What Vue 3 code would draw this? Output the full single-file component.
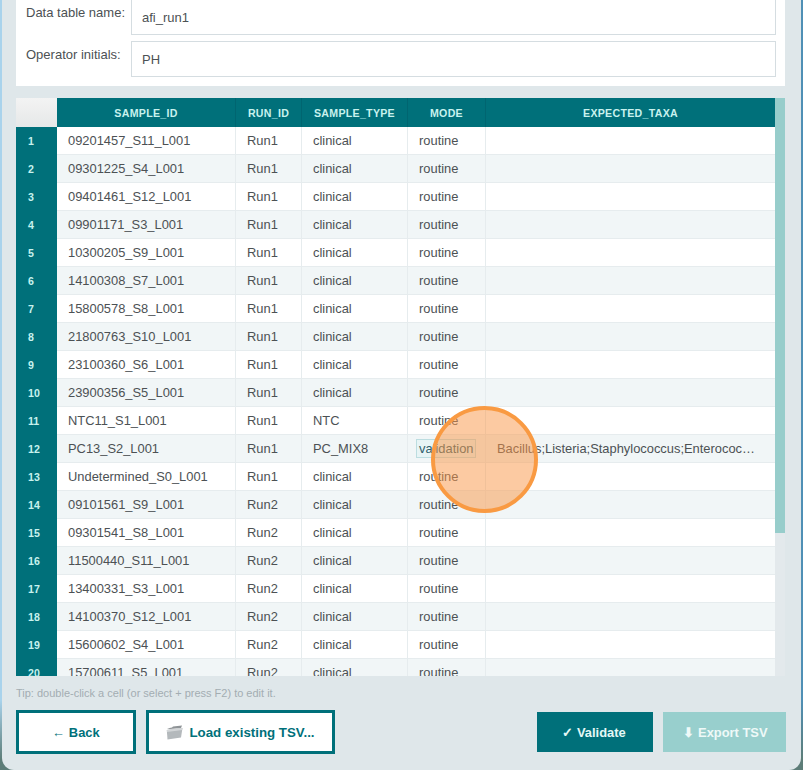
<script setup>
const columns = ['SAMPLE_ID', 'RUN_ID', 'SAMPLE_TYPE', 'MODE', 'EXPECTED_TAXA']

function sample(id, run = 'Run1', type = 'clinical', mode = 'routine', taxa = '') {
  return { id, run, type, mode, taxa }
}

const rows = [
  sample('09201457_S11_L001'),
  sample('09301225_S4_L001'),
  sample('09401461_S12_L001'),
  sample('09901171_S3_L001'),
  sample('10300205_S9_L001'),
  sample('14100308_S7_L001'),
  sample('15800578_S8_L001'),
  sample('21800763_S10_L001'),
  sample('23100360_S6_L001'),
  sample('23900356_S5_L001'),
  sample('NTC11_S1_L001', 'Run1', 'NTC'),
  sample('PC13_S2_L001', 'Run1', 'PC_MIX8', 'validation', 'Bacillus;Listeria;Staphylococcus;Enterococcus;Escherichia;Salmonella'),
  sample('Undetermined_S0_L001'),
  sample('09101561_S9_L001', 'Run2'),
  sample('09301541_S8_L001', 'Run2'),
  sample('11500440_S11_L001', 'Run2'),
  sample('13400331_S3_L001', 'Run2'),
  sample('14100370_S12_L001', 'Run2'),
  sample('15600602_S4_L001', 'Run2'),
  sample('15700611_S5_L001', 'Run2')
]
</script>

<template>
  <div class="desktop">
    <div class="window">
      <div class="form-card">
        <label class="form-label">Data table name:</label>
        <input class="form-input" type="text" value="afi_run1" />
        <label class="form-label">Operator initials:</label>
        <input class="form-input" type="text" value="PH" />
      </div>

      <div class="table-box">
        <div class="table-clip">
          <table class="samples">
            <colgroup>
              <col class="col-index" />
              <col class="col-sample" />
              <col class="col-run" />
              <col class="col-type" />
              <col class="col-mode" />
              <col />
            </colgroup>
            <thead>
              <tr>
                <th class="corner"></th>
                <th v-for="col in columns" :key="col">{{ col }}</th>
              </tr>
            </thead>
            <tbody>
              <tr v-for="(row, i) in rows" :key="row.id">
                <th class="row-no">{{ i + 1 }}</th>
                <td>{{ row.id }}</td>
                <td>{{ row.run }}</td>
                <td>{{ row.type }}</td>
                <td><span :class="{ selected: row.mode === 'validation' }">{{ row.mode }}</span></td>
                <td class="taxa">{{ row.taxa }}</td>
              </tr>
            </tbody>
          </table>
        </div>
        <div class="scrollbar"><div class="thumb"></div></div>
      </div>

      <p class="tip">Tip: double-click a cell (or select + press F2) to edit it.</p>

      <div class="actions">
        <button class="btn outline back">← Back</button>
        <button class="btn outline load">
          <svg class="folder" width="17" height="15" viewBox="0 0 17 15">
            <path d="M1 3.5 L6 2.5 L7 1.5 L16 .5 L15 3 L4 4 Z" fill="#8f9497" />
            <path d="M3.5 4.5 L16.5 3 L15 12.5 L1.5 14.5 L.8 5 Z" fill="#b4b9bc" />
            <path d="M.8 5 L3.5 4.5 L16.5 3 L16.2 5 L1 7 Z" fill="#d3d6d8" />
          </svg>
          Load existing TSV...
        </button>
        <div class="spacer"></div>
        <button class="btn solid validate">✓ Validate</button>
        <button class="btn solid disabled">⬇ Export TSV</button>
      </div>
    </div>

    <div class="click-marker"></div>
  </div>
</template>

<style scoped>
.desktop {
  position: relative;
  width: 803px;
  height: 770px;
  overflow: hidden;
  background:
    linear-gradient(180deg, rgba(70, 105, 100, 0) 0, rgba(70, 105, 100, 0) 700px, #5d7d78 760px),
    linear-gradient(90deg, #a9d3ec 0%, #a9d3ec 50%, #4f8fb5 100%);
  font-family: "Liberation Sans", Arial, sans-serif;
}

.window {
  display: flex;
  flex-direction: column;
  height: 770px;
  margin: 0 2px;
  padding: 0 16px 0 14px;
  box-sizing: border-box;
  background: #dfe7ea;
  border-radius: 0 0 12px 12px;
}

.form-card {
  display: grid;
  grid-template-columns: 105px 1fr;
  align-content: start;
  row-gap: 6px;
  height: 87px;
  margin-top: -1px;
  padding: 0 9px 0 10px;
  box-sizing: border-box;
  background: #fff;
}

.form-label {
  padding-top: 6px;
  font-size: 13px;
  line-height: 15px;
  color: #4c5154;
}

.form-input {
  height: 36px;
  box-sizing: border-box;
  padding: 0 10px;
  border: 1px solid #d5dde1;
  background: #fff;
  font-family: inherit;
  font-size: 13px;
  color: #4c5154;
  outline: none;
}

.table-box {
  display: flex;
  height: 578px;
  margin-top: 12px;
  overflow: hidden;
  background: #fff;
}

.table-clip {
  flex: 1;
  overflow: hidden;
}

.samples {
  width: 759px;
  table-layout: fixed;
  border-collapse: separate;
  border-spacing: 0;
  font-size: 12.9px;
  color: #4c5154;
}

.col-index { width: 41px; }
.col-sample { width: 179px; }
.col-run { width: 66px; }
.col-type { width: 106px; }
.col-mode { width: 78px; }

.samples thead th {
  height: 29px;
  padding: 0;
  box-sizing: border-box;
  background: #00707a;
  border-right: 1px solid #006570;
  color: #c8f2ee;
  font-size: 10.6px;
  font-weight: 700;
  letter-spacing: 0.3px;
  text-align: center;
}

.samples thead th:last-child {
  border-right: none;
}

.samples thead .corner {
  background: linear-gradient(180deg, #f3f3f3, #e6e8e8);
  border-right: none;
}

.samples td {
  height: 28px;
  padding: 0 11px;
  box-sizing: border-box;
  border-right: 1px solid #e6ecee;
  border-bottom: 1px solid #e6ecee;
  white-space: nowrap;
  overflow: hidden;
}

.samples td:last-child {
  border-right: none;
}

.samples tbody tr:nth-child(even) td {
  background: #f1f6f7;
}

.samples .row-no {
  height: 28px;
  padding: 0 0 0 12px;
  box-sizing: border-box;
  background: #00707a;
  color: #c8f2ee;
  font-size: 10.6px;
  font-weight: 700;
  text-align: left;
}

.samples .taxa {
  padding-right: 17px;
  text-overflow: ellipsis;
}

.selected {
  display: inline-block;
  height: 19px;
  line-height: 17px;
  box-sizing: border-box;
  margin-left: -3px;
  padding: 0 2px;
  border: 1px solid #bcdde0;
  background: #e7f4f5;
  color: #2f5f6b;
}

.scrollbar {
  flex: none;
  width: 10px;
  background: #e3e9ec;
}

.thumb {
  height: 435px;
  background: #97cdcb;
}

.tip {
  margin: 11px 0 0;
  font-size: 11px;
  line-height: 13px;
  color: #a3adb2;
}

.actions {
  display: flex;
  align-items: center;
  gap: 10px;
  margin-top: 10px;
  margin-right: -1px;
}

.spacer {
  flex: 1;
}

.btn {
  box-sizing: border-box;
  font-family: inherit;
  font-size: 12.9px;
  font-weight: 700;
  cursor: pointer;
}

.outline {
  height: 44px;
  border: 3px solid #00707a;
  background: #fff;
  color: #00707a;
}

.back { width: 120px; }

.load {
  display: flex;
  align-items: center;
  justify-content: center;
  gap: 6px;
  width: 189px;
  font-size: 13.3px;
}

.folder {
  flex: none;
}

.solid {
  width: 116px;
  height: 40px;
  border: none;
  background: #00707a;
  color: #e4f8f6;
}

.validate {
  padding-right: 8px;
}

.solid.disabled {
  width: 123px;
  padding-left: 8px;
  background: #98cfcd;
  color: #eef9f8;
  cursor: not-allowed;
}

.click-marker {
  position: absolute;
  left: 431px;
  top: 406px;
  width: 107px;
  height: 107px;
  box-sizing: border-box;
  border: 4px solid #f99a42;
  border-radius: 50%;
  background: rgba(250, 150, 70, 0.5);
  pointer-events: none;
}
</style>
